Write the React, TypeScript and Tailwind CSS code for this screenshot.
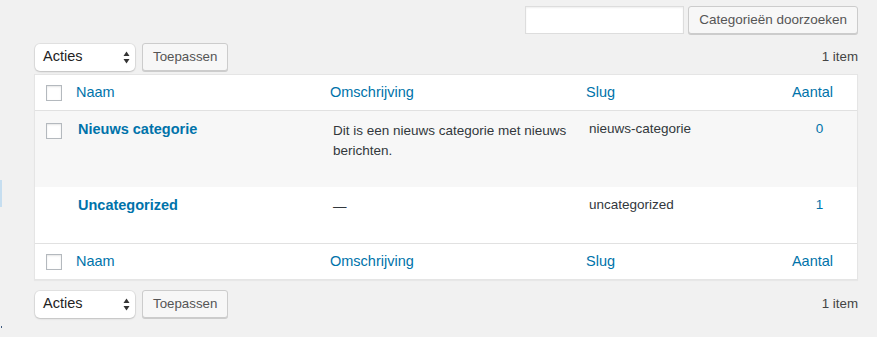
import React from 'react'

const font = { fontFamily: '"Liberation Sans", Arial, sans-serif' }

function Checkbox(): React.JSX.Element {
  return (
    <span className="block w-[16px] h-[16px] bg-white border border-[#b4b9be] shadow-[inset_0_1px_2px_rgba(0,0,0,0.1)]" />
  )
}

function SelectArrows(): React.JSX.Element {
  return (
    <svg width="7" height="13" viewBox="0 0 7 13" className="text-[#333]">
      <path d="M3.5 0.5 L6.5 5 L0.5 5 Z" fill="currentColor" />
      <path d="M3.5 12.5 L6.5 8 L0.5 8 Z" fill="currentColor" />
    </svg>
  )
}

function TableNav({ top }: { top?: boolean }): React.JSX.Element {
  return (
    <div className={`flex items-center h-[28px] ${top ? 'mt-[9px] mb-[3px]' : 'mt-[10px]'}`}>
      <div className="ml-[1px] w-[100px] h-[27px] bg-white rounded-[5px] shadow-[0_0_0_1px_rgba(0,0,0,0.06),0_1px_2px_rgba(0,0,0,0.15)] flex items-center justify-between pl-[8px] pr-[5px] text-[14.5px] text-[#222]">
        <span>Acties</span>
        <SelectArrows />
      </div>
      <button className="ml-[7px] h-[28px] px-[10px] bg-[#f7f7f7] border border-[#ccc] rounded-[3px] shadow-[0_1px_0_#ccc] text-[13.3px] text-[#555]">
        Toepassen
      </button>
      <div className="ml-auto text-[13.3px] text-[#444]">1 item</div>
    </div>
  )
}

function HeaderRow({ footer }: { footer?: boolean }): React.JSX.Element {
  return (
    <div
      className={`grid grid-cols-[33px_254px_256px_206px_1fr] h-[36px] items-center text-[14.5px] text-[#0073aa] ${
        footer ? 'border-t border-[#e1e1e1]' : 'border-b border-[#e1e1e1]'
      }`}
    >
      <div className="pl-[11px] pt-[1px]">
        <Checkbox />
      </div>
      <div className="pl-[8px] pt-[1px]">Naam</div>
      <div className="pl-[8px] pt-[1px]">Omschrijving</div>
      <div className="pl-[8px] pt-[1px]">Slug</div>
      <div className="text-center pr-[16px] pt-[1px]">Aantal</div>
    </div>
  )
}

type Term = { name: string; desc: string; slug: string; count: number; check: boolean; alt: boolean; height: string }

const terms: Term[] = [
  {
    name: 'Nieuws categorie',
    desc: 'Dit is een nieuws categorie met nieuws berichten.',
    slug: 'nieuws-categorie',
    count: 0,
    check: true,
    alt: true,
    height: 'h-[76px]',
  },
  {
    name: 'Uncategorized',
    desc: '—',
    slug: 'uncategorized',
    count: 1,
    check: false,
    alt: false,
    height: 'h-[56px]',
  },
]

function TermRow({ term }: { term: Term }): React.JSX.Element {
  return (
    <div
      className={`grid grid-cols-[33px_254px_256px_206px_1fr] ${term.height} text-[13.5px] text-[#32373c] ${
        term.alt ? 'bg-[#f7f7f7]' : 'bg-white'
      }`}
    >
      <div className="pl-[11px] pt-[12px]">{term.check && <Checkbox />}</div>
      <div className="pl-[10px] pt-[8px] leading-[20px]">
        <span className="font-bold text-[14.5px] text-[#0073aa]">{term.name}</span>
      </div>
      <div className="pl-[11px] pr-[2px] pt-[10px] leading-[19.5px]">{term.desc}</div>
      <div className="pl-[11px] pt-[8px] leading-[20px]">{term.slug}</div>
      <div className="text-center pt-[8px] leading-[20px] text-[#0073aa] pr-[2px]">{term.count}</div>
    </div>
  )
}

export default function App(): React.JSX.Element {
  return (
    <div className="relative w-full h-[337px] bg-[#f1f1f1] overflow-hidden" style={font}>
      {/* fragments of the admin menu at the left edge */}
      <div className="absolute left-0 top-[180px] w-[2px] h-[27px] bg-[#c6def0]" />
      <div className="absolute left-[1px] top-[326px] w-[1px] h-[2px] bg-[#3d5a80]" />

      <div className="pl-[34px] pr-[19px] pt-[6px]">
        {/* Search */}
        <div className="flex justify-end gap-[4px]">
          <input
            className="w-[159px] h-[28px] bg-white border border-[#ddd] shadow-[inset_0_1px_2px_rgba(0,0,0,0.07)] outline-none"
            aria-label="Zoeken"
          />
          <button className="h-[28px] px-[10px] bg-[#f7f7f7] border border-[#ccc] rounded-[3px] shadow-[0_1px_0_#ccc] text-[13.5px] text-[#555]">
            Categorieën doorzoeken
          </button>
        </div>

        <TableNav top />

        {/* Table */}
        <div className="bg-white border border-[#e5e5e5] shadow-[0_1px_1px_rgba(0,0,0,0.04)]">
          <HeaderRow />
          {terms.map((t) => (
            <TermRow key={t.slug} term={t} />
          ))}
          <HeaderRow footer />
        </div>

        <TableNav />
      </div>
    </div>
  )
}
